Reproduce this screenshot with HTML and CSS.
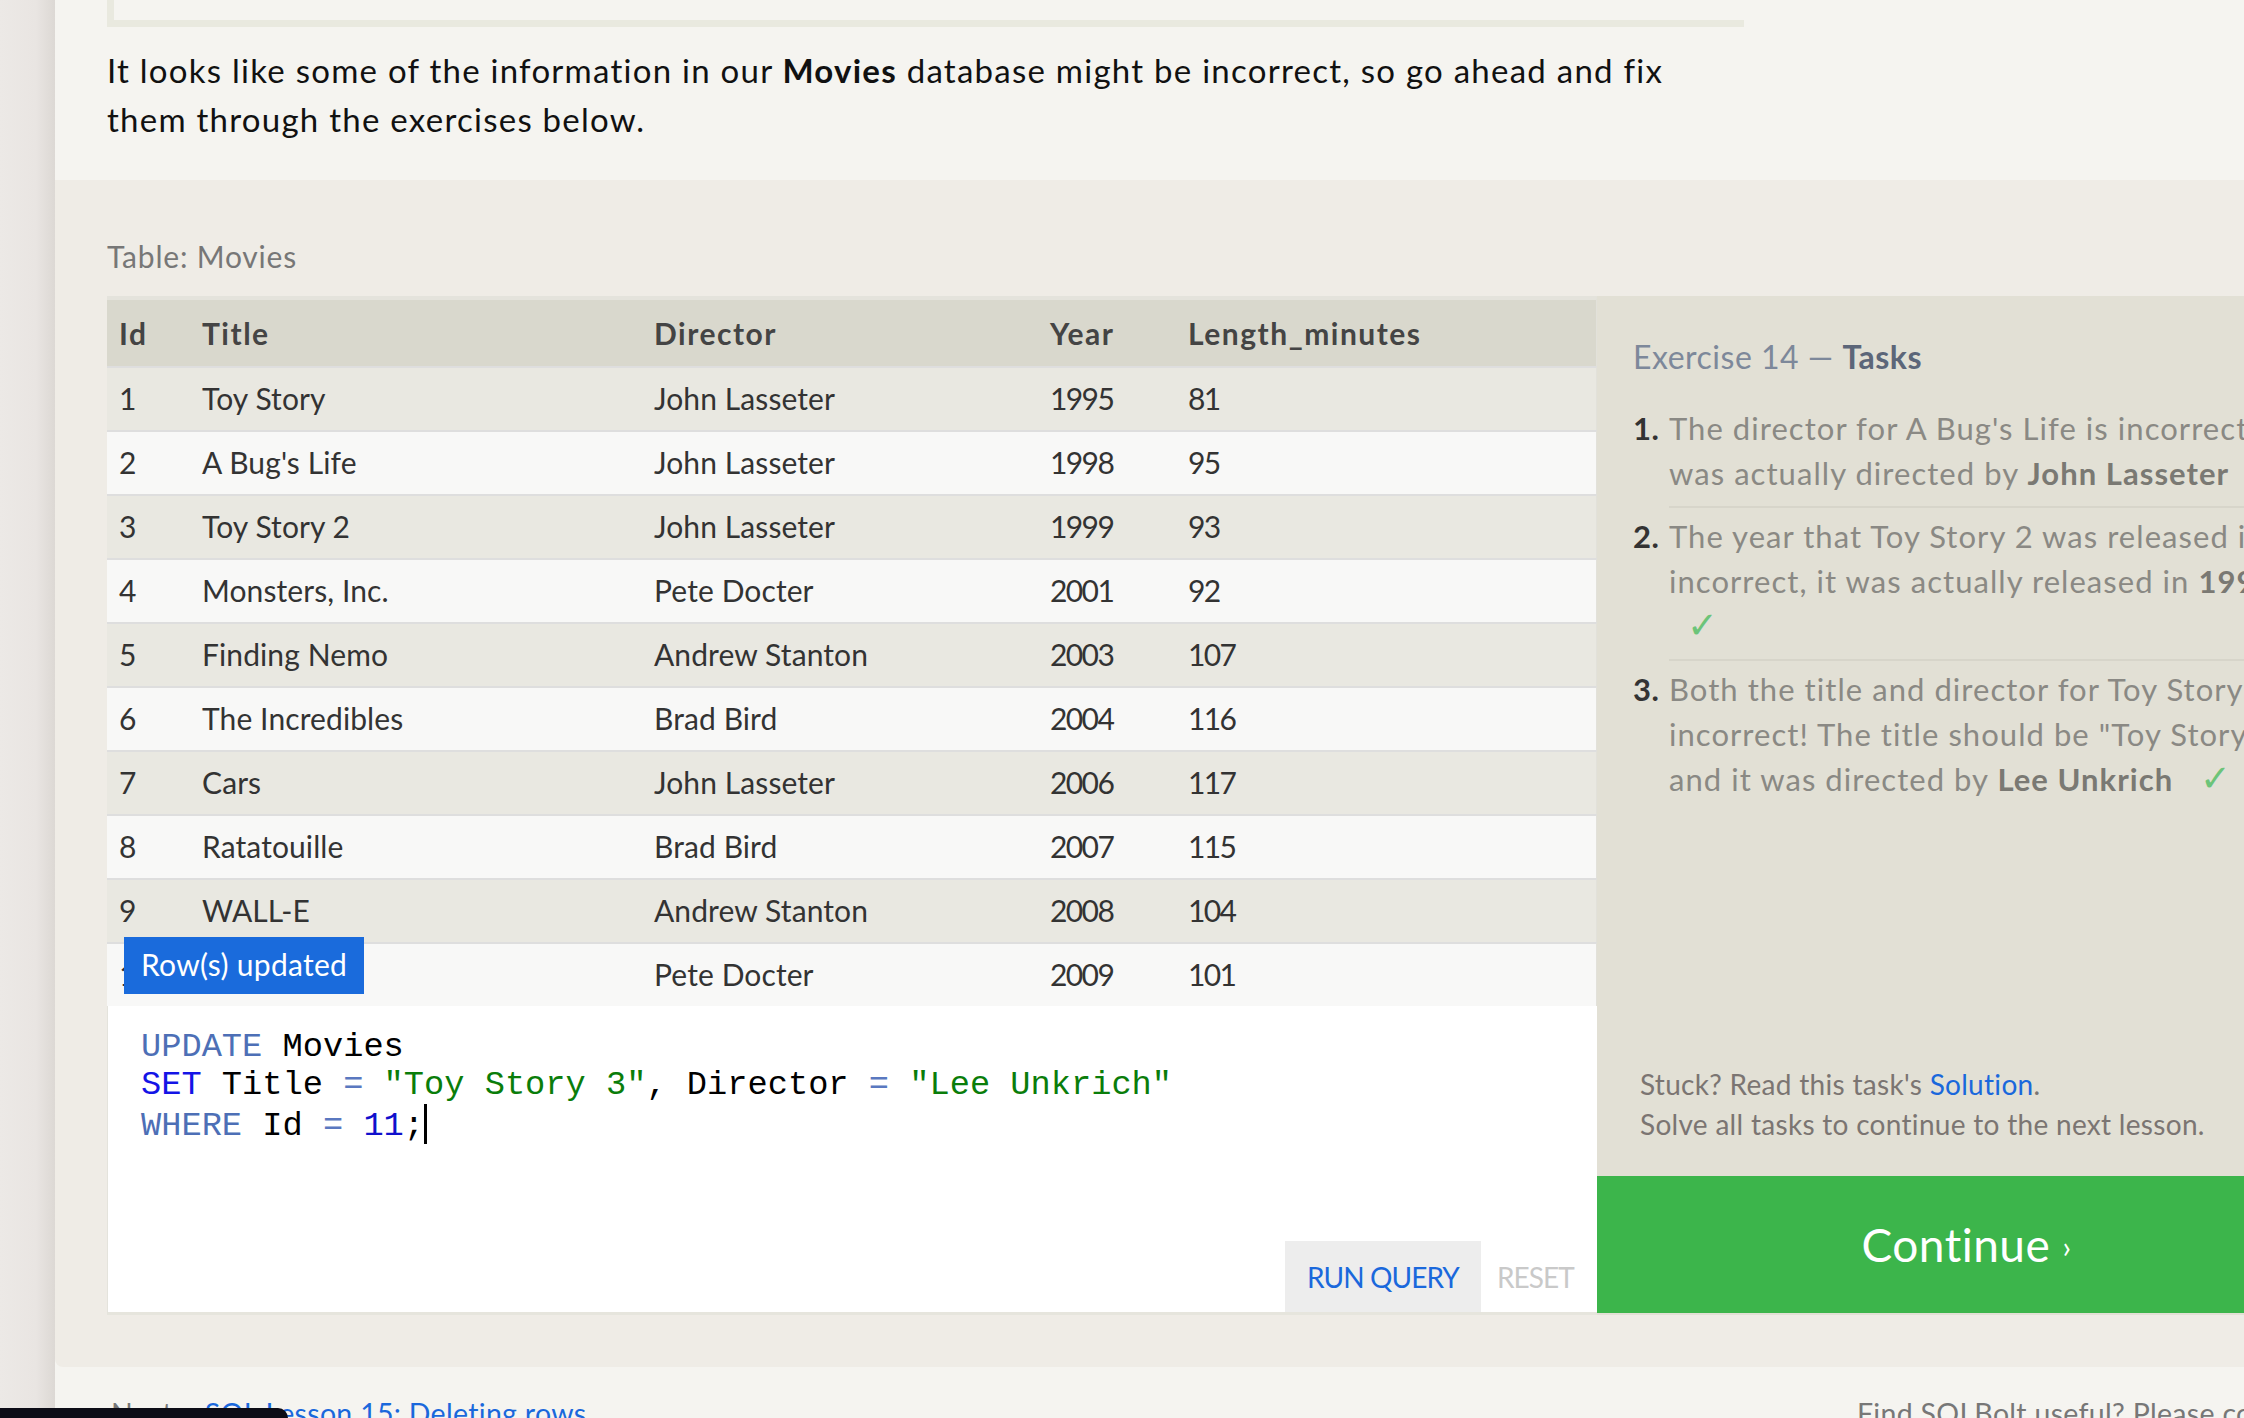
FILE: index.html
```html
<!DOCTYPE html>
<html lang="en">
<head>
<meta charset="utf-8">
<title>SQL Lesson 14: Updating rows</title>
<link rel="stylesheet" href="styles.css">
</head>
<body>
<div class="page">
  <aside class="sidebar"></aside>
  <main class="main">
    <div class="intro">
      <div class="prev-box"></div>
      <p class="lead">It looks like some of the information in our <b>Movies</b> database might be incorrect, so go ahead and fix<br>them through the exercises below.</p>
    </div>

    <section class="exercise">
      <div class="table-label">Table: Movies</div>
      <div class="workspace">
        <div class="left">
          <table class="data">
            <thead>
              <tr><th class="c-id">Id</th><th class="c-title">Title</th><th class="c-dir">Director</th><th class="c-year">Year</th><th class="c-len">Length_minutes</th></tr>
            </thead>
            <tbody>
              <tr class="odd"><td class="n">1</td><td>Toy Story</td><td>John Lasseter</td><td class="n">1995</td><td class="n">81</td></tr>
              <tr class="even"><td class="n">2</td><td>A Bug's Life</td><td>John Lasseter</td><td class="n">1998</td><td class="n">95</td></tr>
              <tr class="odd"><td class="n">3</td><td>Toy Story 2</td><td>John Lasseter</td><td class="n">1999</td><td class="n">93</td></tr>
              <tr class="even"><td class="n">4</td><td>Monsters, Inc.</td><td>Pete Docter</td><td class="n">2001</td><td class="n">92</td></tr>
              <tr class="odd"><td class="n">5</td><td>Finding Nemo</td><td>Andrew Stanton</td><td class="n">2003</td><td class="n">107</td></tr>
              <tr class="even"><td class="n">6</td><td>The Incredibles</td><td>Brad Bird</td><td class="n">2004</td><td class="n">116</td></tr>
              <tr class="odd"><td class="n">7</td><td>Cars</td><td>John Lasseter</td><td class="n">2006</td><td class="n">117</td></tr>
              <tr class="even"><td class="n">8</td><td>Ratatouille</td><td>Brad Bird</td><td class="n">2007</td><td class="n">115</td></tr>
              <tr class="odd"><td class="n">9</td><td>WALL-E</td><td>Andrew Stanton</td><td class="n">2008</td><td class="n">104</td></tr>
              <tr class="even"><td class="n">10</td><td>Up</td><td>Pete Docter</td><td class="n">2009</td><td class="n">101</td></tr>
            </tbody>
          </table>
          <div class="toast">Row(s) updated</div>
          <div class="editor">
<pre class="code"><span class="kw">UPDATE</span> Movies
<span class="kw2">SET</span> Title <span class="op">=</span> <span class="str">"Toy Story 3"</span>, Director <span class="op">=</span> <span class="str">"Lee Unkrich"</span>
<span class="kw">WHERE</span> Id <span class="op">=</span> <span class="num">11</span>;<span class="cursor"></span></pre>
            <div class="actions">
              <button class="btn run">RUN QUERY</button>
              <button class="btn reset">RESET</button>
            </div>
          </div>
        </div>

        <div class="tasks">
          <h2 class="tasks-title">Exercise 14 — <span class="tasks-strong">Tasks</span></h2>
          <ol class="task-list">
            <li class="task"><span class="task-num">1.</span><div class="task-body">The director for A Bug's Life is incorrect, it<br>was actually directed by <b>John Lasseter</b> <span class="check">✓</span></div></li>
            <li class="task"><span class="task-num">2.</span><div class="task-body">The year that Toy Story 2 was released is<br>incorrect, it was actually released in <b>1999</b><br><span class="check">✓</span></div></li>
            <li class="task"><span class="task-num">3.</span><div class="task-body">Both the title and director for Toy Story 8 is<br>incorrect! The title should be "Toy Story 3"<br>and it was directed by <b>Lee Unkrich</b> <span class="check">✓</span></div></li>
          </ol>
          <div class="stuck">
            <div>Stuck? Read this task's <a class="link" href="#">Solution</a>.</div>
            <div>Solve all tasks to continue to the next lesson.</div>
          </div>
          <a class="continue" href="#">Continue <span class="chev">›</span></a>
        </div>
      </div>
    </section>

    <footer class="footer">
      <div class="next">Next – <a class="link" href="#">SQL Lesson 15: Deleting rows</a></div>
      <div class="donate">Find SQLBolt useful? Please consider donating to support the site</div>
    </footer>
  </main>
</div>
<div class="statusbar"></div>
</body>
</html>
```

FILE: styles.css
```css
html, body {
  margin: 0;
  padding: 0;
}

body {
  width: 2244px;
  height: 1418px;
  overflow: hidden;
  background: #f5f4f0;
  font-family: Lato, "Liberation Sans", sans-serif;
  color: #111;
}

.page {
  display: flex;
  align-items: stretch;
  min-height: 1418px;
}

.sidebar {
  flex: none;
  width: 55px;
  background: linear-gradient(to right, #ece9e6 0%, #e9e5e2 65%, #dcd8d4 100%);
}

.main {
  flex: none;
  width: 2290px;
}

/* intro */
.prev-box {
  box-sizing: border-box;
  margin-left: 52px;
  width: 1637px;
  height: 27px;
  border-left: 7px solid #e9e9df;
  border-bottom: 7px solid #e9e9df;
}

.lead {
  margin: 19px 0 36px 52px;
  font-size: 33px;
  line-height: 49px;
  letter-spacing: 1.25px;
  white-space: nowrap;
  color: #111;
}

.lead b {
  font-weight: 700;
}

/* exercise */
.exercise {
  background: #efece6;
  border-bottom-left-radius: 8px;
  padding: 58px 0 52px 52px;
}

.table-label {
  font-size: 30px;
  line-height: 36px;
  color: #777;
  letter-spacing: 0.8px;
  margin-bottom: 22px;
}

.workspace {
  display: flex;
  align-items: stretch;
}

.left {
  position: relative;
  flex: none;
  width: 1490px;
  display: flex;
  flex-direction: column;
}

.data {
  width: 1490px;
  border-collapse: separate;
  border-spacing: 0;
  table-layout: fixed;
  font-size: 30px;
  letter-spacing: 0.1px;
}

.data th,
.data td {
  text-align: left;
  padding: 0 0 0 12px;
  vertical-align: middle;
  white-space: nowrap;
}

.data th:last-child,
.data td:last-child {
  border-right: 1px solid #e2e1da;
}

.data th {
  height: 65px;
  background: #d9d8cd;
  border-top: 4px solid #e4e3dc;
  color: #444;
  font-weight: 700;
  letter-spacing: 1.5px;
  padding-bottom: 1px;
}

.data td {
  height: 60px;
  padding-bottom: 2px;
  border-top: 2px solid #dedede;
  color: #333;
}

.data td.n {
  letter-spacing: -1.6px;
}

.data .odd td {
  background: #e9e8e1;
}

.data .even td {
  background: #f8f8f7;
}

.c-id { width: 71px; }
.c-title { width: 440px; }
.c-dir { width: 384px; }
.c-year { width: 126px; }

.toast {
  position: absolute;
  left: 17px;
  top: 641px;
  height: 57px;
  padding: 0 17px;
  background: #1a6bdc;
  color: #fff;
  font-size: 30px;
  line-height: 55px;
  letter-spacing: 0.3px;
}

.editor {
  box-sizing: border-box;
  height: 309px;
  flex: none;
  display: flex;
  flex-direction: column;
  background: #fff;
  border-left: 1px solid #e4e3dc;
  border-bottom: 3px solid #e6e5dd;
}

.code {
  margin: 0;
  padding: 22px 0 0 33px;
  font-family: "Liberation Mono", "DejaVu Sans Mono", monospace;
  font-size: 33.7px;
  line-height: 38px;
  color: #000;
}

.kw { color: #4d6fb6; }
.kw2 { color: #1414e6; }
.op { color: #5a78c0; }
.str { color: #0a7d0a; }
.num { color: #1010cc; }

.cursor {
  display: inline-block;
  width: 3px;
  height: 40px;
  background: #000;
  vertical-align: -9px;
}

.actions {
  margin-top: auto;
  align-self: flex-end;
  display: flex;
}

.btn {
  border: 0;
  margin: 0;
  font-family: Lato, "Liberation Sans", sans-serif;
  font-size: 28px;
  letter-spacing: -0.9px;
  height: 71px;
  cursor: pointer;
}

.run {
  background: #ededed;
  color: #1a68dc;
  padding: 0 22px;
}

.reset {
  background: transparent;
  color: #c9c9c9;
  padding: 0 23px 0 16px;
}

/* tasks panel */
.tasks {
  flex: none;
  width: 739px;
  box-sizing: border-box;
  background: #e2e0d5;
  display: flex;
  flex-direction: column;
  padding-top: 42px;
}

.tasks-title {
  margin: 0 0 24px 36px;
  font-size: 32px;
  line-height: 38px;
  font-weight: 400;
  letter-spacing: 0.5px;
  color: #7d889a;
}

.tasks-strong {
  color: #5c6679;
  font-weight: 700;
}

.task-list {
  list-style: none;
  margin: 0;
  padding: 0 0 0 36px;
}

.task {
  display: flex;
  font-size: 31px;
  line-height: 45px;
  letter-spacing: 1.05px;
}

.task-num {
  flex: none;
  width: 36px;
  padding-top: 6px;
  color: #333;
  font-weight: 700;
  letter-spacing: 0.5px;
}

.task-body {
  flex: 1;
  white-space: nowrap;
  color: #8a8984;
  padding: 6px 0 10px;
}

.task + .task .task-body {
  border-top: 2px solid #d7d5ca;
}

.task + .task .task-num {
  padding-top: 8px;
}

.task-body b {
  color: #7a7973;
  font-weight: 700;
}

.check {
  display: inline-block;
  margin-left: 18px;
  color: #6cc479;
  font-size: 37px;
  line-height: 40px;
}

.stuck {
  margin-top: auto;
  padding: 0 0 32px 43px;
  font-size: 28px;
  line-height: 40px;
  letter-spacing: 0.3px;
  color: #7b7572;
}

.link {
  color: #1a68dc;
  text-decoration: none;
}

.continue {
  display: block;
  flex: none;
  height: 137px;
  margin-bottom: 2px;
  background: #3cb54b;
  color: #fff;
  text-align: center;
  font-size: 46px;
  line-height: 137px;
  text-decoration: none;
  letter-spacing: 0.5px;
}

.chev {
  font-size: 30px;
  vertical-align: 4px;
}

/* footer */
.footer {
  display: grid;
  grid-template-columns: 1746px 1fr;
  padding: 28px 0 0 56px;
  font-size: 28.5px;
  line-height: 36px;
  color: #777;
  letter-spacing: 0.3px;
  white-space: nowrap;
}

.statusbar {
  position: fixed;
  left: 0;
  bottom: 0;
  width: 288px;
  height: 10px;
  background: #0c0c16;
  border-top-right-radius: 10px;
}
```
